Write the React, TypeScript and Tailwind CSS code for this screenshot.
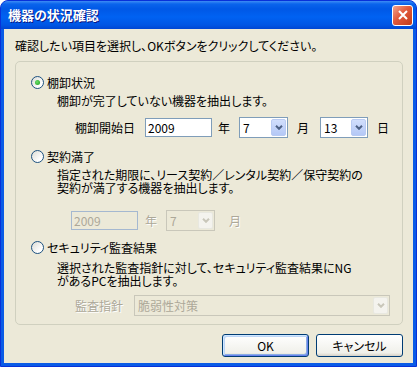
import React from "react";

const font = "font-['Noto_Sans_CJK_JP',sans-serif] [font-feature-settings:'palt']";
const dim = "text-[#aca899] [text-shadow:1px_1px_0_#ffffff]";

const Radio = ({ checked }: { checked?: boolean }) => (
  <span className="flex h-[13px] w-[13px] shrink-0 items-center justify-center rounded-full border border-[#1c5180] bg-[linear-gradient(135deg,#dcdcd5,#ffffff_75%)]">
    {checked && (
      <span className="h-[5px] w-[5px] rounded-full bg-[radial-gradient(circle_at_40%_40%,#6be06b,#1c9a1c)]" />
    )}
  </span>
);

const Chevron = ({ color }: { color: string }) => (
  <svg width="8" height="5" viewBox="0 0 8 5">
    <path d="M1 0.8 L4 3.8 L7 0.8" fill="none" stroke={color} strokeWidth="2" />
  </svg>
);

const Select = ({ value, width, disabled }: { value: string; width: string; disabled?: boolean }) => (
  <div
    className={`flex h-[21px] shrink-0 border p-[1px] ${width} ${
      disabled ? "border-[#c9c7ba] bg-[#ece9d8]" : "border-[#7f9db9] bg-white"
    }`}
  >
    <span className={`flex-1 pl-[2px] text-[12px] leading-[17px] ${disabled ? "text-[#aca899]" : "text-black"}`}>
      {value}
    </span>
    {disabled ? (
      <span className="flex w-[15px] items-center justify-center rounded-[2px] border border-[#e8e8e0] bg-[#f4f3ee]">
        <Chevron color="#c9c7ba" />
      </span>
    ) : (
      <span className="flex w-[15px] items-center justify-center rounded-[2px] border border-[#b9cbf3] bg-[linear-gradient(to_bottom,#d1defc,#b4c8f6)]">
        <Chevron color="#4d6185" />
      </span>
    )}
  </div>
);

const Input = ({ value, disabled }: { value: string; disabled?: boolean }) => (
  <div
    className={`h-[19px] w-[67px] shrink-0 border pl-[2px] text-[12px] leading-[17px] ${
      disabled ? "border-[#a5b8d0] bg-[#ece9d8] text-[#aca899]" : "border-[#7f9db9] bg-white text-black"
    }`}
  >
    {value}
  </div>
);

// two-line description, one block per line
const Desc = ({ lines, className }: { lines: string[]; className: string }) => (
  <div className={`pl-[41px] ${className}`}>
    {lines.map((l) => (
      <p key={l} className="h-[13px] overflow-visible whitespace-nowrap leading-[13px]">
        {l}
      </p>
    ))}
  </div>
);

const App = () => {
  return (
    <div className={`flex h-[367px] w-[417px] flex-col overflow-hidden rounded-t-[8px] border border-[#0831d9] bg-[#0a5be6] ${font}`}>
      <div className="flex h-[28px] shrink-0 items-center justify-between bg-[linear-gradient(to_bottom,#3d8cf5_0px,#0a64ec_3px,#0058e6_8px,#0062f2_16px,#0056e4_24px,#0046d2_28px)] pl-[7px] pr-[3px]">
        <span className="text-[13px] font-bold leading-[16px] text-white [text-shadow:1px_1px_0_#0a1883]">
          機器の状況確認
        </span>
        <span className="flex h-[21px] w-[21px] items-center justify-center rounded-[3px] border border-white bg-[linear-gradient(135deg,#f3a58e,#e2593b_45%,#c13c1a)]">
          <svg width="10" height="10" viewBox="0 0 10 10">
            <path d="M1 1 L9 9 M9 1 L1 9" stroke="#ffffff" strokeWidth="2" />
          </svg>
        </span>
      </div>

      <div className="mx-[3px] mb-[3px] flex flex-1 flex-col bg-[#ece9d8] pl-[11px] pr-[10px] pt-[9px] text-[12px] text-black">
        <p className="h-[15px] leading-[15px]">確認したい項目を選択し、OKボタンをクリックしてください。</p>

        <div className="mt-[8px] flex h-[264px] w-[388px] flex-col rounded-[5px] border border-[#d0d0bf] pt-[13px]">
          <div className="flex h-[15px] items-center pl-[15px] leading-[15px]">
            <Radio checked />
            <span className="ml-[3px]">棚卸状況</span>
          </div>
          <p className="mt-[3px] h-[15px] pl-[41px] leading-[15px]">棚卸が完了していない機器を抽出します。</p>
          <div className="mt-[9px] flex h-[21px] items-center pl-[59px] leading-[15px]">
            <span className="w-[60px]">棚卸開始日</span>
            <span className="ml-[10px]">
              <Input value="2009" />
            </span>
            <span className="ml-[6px]">年</span>
            <span className="ml-[9px]">
              <Select value="7" width="w-[49px]" />
            </span>
            <span className="ml-[9px]">月</span>
            <span className="ml-[11px]">
              <Select value="13" width="w-[48px]" />
            </span>
            <span className="ml-[9px]">日</span>
          </div>

          <div className="mt-[11px] flex h-[15px] items-center pl-[15px] leading-[15px]">
            <Radio />
            <span className="ml-[3px]">契約満了</span>
          </div>
          <Desc
            className="mt-[4px]"
            lines={["指定された期限に、リース契約／レンタル契約／保守契約の", "契約が満了する機器を抽出します。"]}
          />
          <div className="mt-[16px] flex h-[20px] items-center pl-[55px] leading-[15px]">
            <Input value="2009" disabled />
            <span className={`ml-[7px] ${dim}`}>年</span>
            <span className="ml-[9px]">
              <Select value="7" width="w-[49px]" disabled />
            </span>
            <span className={`ml-[14px] ${dim}`}>月</span>
          </div>

          <div className="mt-[10px] flex h-[15px] items-center pl-[15px] leading-[15px]">
            <Radio />
            <span className="ml-[3px]">セキュリティ監査結果</span>
          </div>
          <Desc
            className="mt-[6px]"
            lines={["選択された監査指針に対して、セキュリティ監査結果にNG", "があるPCを抽出します。"]}
          />
          <div className="mt-[8px] flex h-[21px] items-center pl-[59px] leading-[15px]">
            <span className={`w-[48px] ${dim}`}>監査指針</span>
            <span className="ml-[11px]">
              <Select value="脆弱性対策" width="w-[256px]" disabled />
            </span>
          </div>
        </div>

        <div className="mt-[9px] flex w-[388px] justify-end gap-[7px]">
          <button className="h-[23px] w-[87px] rounded-[3px] border border-[#003c74] bg-[linear-gradient(to_bottom,#ffffff,#f0f0ea_85%,#d6d0c5)] text-[12px] leading-[15px] text-black shadow-[inset_1px_1px_0_#cee7ff,inset_-1px_-1px_0_#6982ee,inset_2px_2px_0_#bcd4f6,inset_-2px_-2px_0_#89ade4]">
            OK
          </button>
          <button className="h-[23px] w-[87px] rounded-[3px] border border-[#003c74] bg-[linear-gradient(to_bottom,#ffffff,#f0f0ea_85%,#d6d0c5)] text-[12px] leading-[15px] text-black">
            キャンセル
          </button>
        </div>
      </div>
    </div>
  );
};

export default App;
